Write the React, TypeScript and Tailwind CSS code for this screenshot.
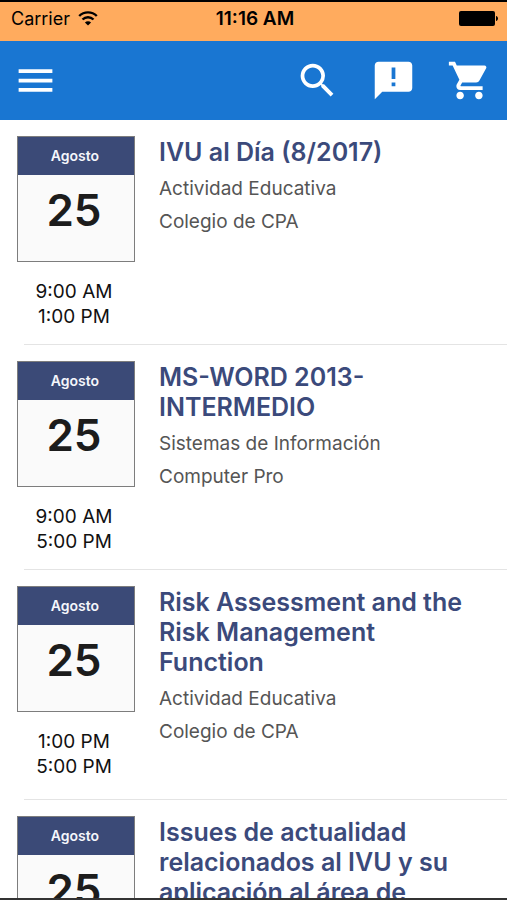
import React from 'react';
import { MdMenu, MdSearch, MdShoppingCart } from 'react-icons/md';

interface Evento {
  id: number;
  mes: string;
  dia: string;
  horario: string[];
  titulo: string;
  detalles: string[];
}

const eventos: Evento[] = [
  {
    id: 1,
    mes: 'Agosto',
    dia: '25',
    horario: ['9:00 AM', '1:00 PM'],
    titulo: 'IVU al Día (8/2017)',
    detalles: ['Actividad Educativa', 'Colegio de CPA'],
  },
  {
    id: 2,
    mes: 'Agosto',
    dia: '25',
    horario: ['9:00 AM', '5:00 PM'],
    titulo: 'MS-WORD 2013-INTERMEDIO',
    detalles: ['Sistemas de Información', 'Computer Pro'],
  },
  {
    id: 3,
    mes: 'Agosto',
    dia: '25',
    horario: ['1:00 PM', '5:00 PM'],
    titulo: 'Risk Assessment and the Risk Management Function',
    detalles: ['Actividad Educativa', 'Colegio de CPA'],
  },
  {
    id: 4,
    mes: 'Agosto',
    dia: '25',
    horario: [],
    titulo: 'Issues de actualidad relacionados al IVU y su aplicación al área de',
    detalles: [],
  },
];

const StatusBar: React.FC = () => (
  <div className="grid h-[41px] shrink-0 grid-cols-3 items-center border-t-2 border-black bg-[#ffab5e] pb-1.5 pl-[11px] pr-2 text-lg text-black">
    <div className="flex items-center gap-2">
      <span>Carrier</span>
      <svg className="h-4 w-5" viewBox="0 0 20 16" fill="none" aria-hidden="true">
        <path d="M1.2 5a12.500 12.500 0 0 1 17.600 0" stroke="currentColor" strokeWidth="2.4" />
        <path d="M4.500 8.500a7.800 7.800 0 0 1 11 0" stroke="currentColor" strokeWidth="2.4" />
        <path d="M10 14.600l-3.100-3.100a4.400 4.400 0 0 1 6.200 0z" fill="currentColor" />
      </svg>
    </div>
    <span className="whitespace-nowrap text-center text-[19px] font-semibold">11:16 AM</span>
    <svg className="h-4 w-10 justify-self-end" viewBox="0 0 40 16" fill="currentColor" aria-hidden="true">
      <rect x="0" y="0" width="36" height="15" rx="2" />
      <path d="M37 5c1.400.3 2 1.300 2 2.500s-.6 2.200-2 2.500z" />
    </svg>
  </div>
);

const Toolbar: React.FC = () => (
  <header className="flex h-[79px] shrink-0 items-center justify-between bg-[#1976d2] pl-[13px] pr-[15px] text-white">
    <button type="button" aria-label="Menú">
      <MdMenu className="size-[45px]" />
    </button>
    <div className="flex items-center gap-[31px]">
      <button type="button" aria-label="Buscar">
        <MdSearch className="size-[45px]" />
      </button>
      <button type="button" aria-label="Avisos">
        <svg className="size-[45px]" viewBox="0 0 24 24" fill="currentColor" aria-hidden="true">
          <path d="M20 2H4c-1.100 0-2 .9-2 2v18l4-4h14c1.100 0 2-.9 2-2V4c0-1.100-.9-2-2-2zm-7 13h-2v-2h2v2zm0-3.800h-2V5h2v6.200z" />
        </svg>
      </button>
      <button type="button" aria-label="Carrito">
        <MdShoppingCart className="size-[45px]" />
      </button>
    </div>
  </header>
);

const EventoItem: React.FC<{ evento: Evento }> = ({ evento }) => (
  <li>
    <div className="flex gap-6 pl-[17px] pr-10 pt-4">
      {/* Fecha y horario */}
      <div className="w-[118px] shrink-0 pb-[15px] text-center">
        <div className="h-[126px] border border-[#7d7d7d] bg-[#fafafa]">
          <div className="bg-[#3b4a77] pr-0.5 text-sm font-semibold leading-[38px] text-[#f4f6fb]">{evento.mes}</div>
          <div className="pr-1 pt-1 text-[44px] font-semibold leading-[62px] text-[#1c1c1c]">{evento.dia}</div>
        </div>
        <div className="mt-[17px] pr-1 text-[19px] leading-[25px] text-[#111]">
          {evento.horario.map((hora) => (
            <p key={hora}>{hora}</p>
          ))}
        </div>
      </div>

      {/* Detalle */}
      <div className="min-w-0 flex-1 pb-[51px] pt-px">
        <h2 className="mb-[5px] text-[25px] font-semibold leading-[30px] text-[#3b4a7b]">{evento.titulo}</h2>
        {evento.detalles.map((detalle) => (
          <p key={detalle} className="text-[19px] leading-[33px] text-[#555]">{detalle}</p>
        ))}
      </div>
    </div>
    <div className="ml-6 h-px bg-[#e4e4e4]" />
  </li>
);

const App: React.FC = () => {
  return (
    <div className="flex h-screen flex-col overflow-hidden border-b-2 border-[#333] bg-white font-['Inter',sans-serif]">
      <StatusBar />
      <Toolbar />
      <main className="min-h-0 flex-1 overflow-hidden">
        <ul>
          {eventos.map((evento) => (
            <EventoItem key={evento.id} evento={evento} />
          ))}
        </ul>
      </main>
    </div>
  );
};

export default App;
